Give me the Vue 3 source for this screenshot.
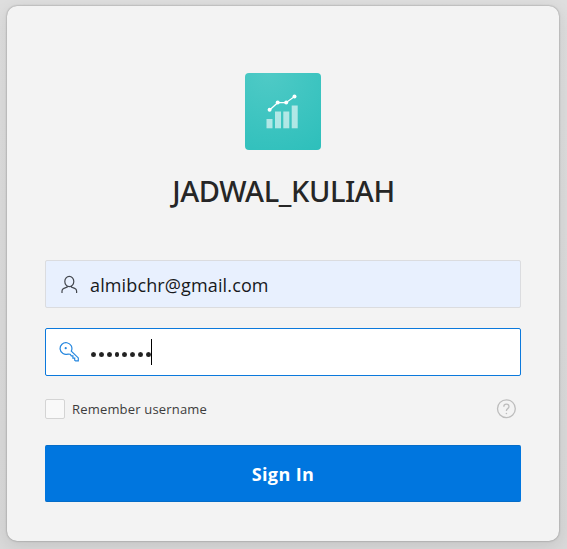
<script setup>
import { ref } from 'vue'

const username = ref('almibchr@gmail.com')
const passwordLength = 8
</script>

<template>
  <main class="page">
    <section class="card">
      <svg class="logo" viewBox="0 0 76 77">
        <g fill="#fff" fill-opacity=".6">
          <rect x="21.5" y="46" width="6" height="9.3" />
          <rect x="30" y="38.5" width="6" height="16.8" />
          <rect x="38.3" y="38.5" width="6" height="16.8" />
          <rect x="46.7" y="32.5" width="6" height="22.8" />
        </g>
        <path d="M24.6 37 32.7 29.7H41L49.5 23.5" fill="none" stroke="#fff" stroke-width="1.2" />
        <g fill="#fff">
          <circle cx="24.6" cy="36.8" r="2" />
          <circle cx="32.7" cy="29.6" r="2" />
          <circle cx="41.2" cy="29.6" r="2" />
          <circle cx="49.5" cy="23.5" r="2" />
        </g>
      </svg>
      <h1 class="title"><span>JADWAL_KULIAH</span></h1>
      <div class="field filled">
        <svg class="icon" viewBox="0 0 20 20" fill="none" stroke="#43474e" stroke-width="1.2">
          <ellipse cx="10.3" cy="7.5" rx="4.5" ry="5.1" />
          <path d="M8.2 12v1.1L4.9 14.4Q3 15.2 3 17V18.9M12.4 12v1.1l3.3 1.3q1.9.8 1.9 2.6V18.9" />
        </svg>
        <span class="value">{{ username }}</span>
      </div>
      <div class="field focused">
        <svg class="icon" viewBox="0 0 20 20" fill="none" stroke="#2587df" stroke-width="1.2">
          <path d="M12.3 9.1A5.9 5.9 0 1 0 9.2 12L11.2 12.2 12.3 13.9H13.9V16.2H15.7V18.3L16.6 18.9H19.3V15.9Z" />
          <circle cx="6.7" cy="6.2" r="1.1" fill="#2587df" stroke="none" />
        </svg>
        <span class="password"><i v-for="n in passwordLength" :key="n" class="dot"></i></span>
        <span class="caret"></span>
      </div>
      <div class="options">
        <span class="checkbox"></span>
        <span class="label">Remember username</span>
        <svg class="help" viewBox="0 0 20 20" fill="none" stroke="#bdbdbd" stroke-width="1.3">
          <circle cx="10.4" cy="9.7" r="8.9" />
          <path d="M7.8 7.7Q7.8 5.2 10.4 5.2T13 7.5Q13 8.7 11.7 9.6T10.4 12.1" />
          <circle cx="10.4" cy="14.5" r=".8" fill="#bdbdbd" stroke="none" />
        </svg>
      </div>
      <button class="submit"><span>Sign In</span></button>
    </section>
  </main>
</template>

<style>
body {
  background: #d8d8d8;
}
</style>

<style scoped>
.page {
  box-sizing: border-box;
  height: 549px;
  padding: 6px 8px 8px 7px;
  overflow: hidden;
  background: linear-gradient(#dedede, #d9d9d9);
  font-family: "Open Sans", "Noto Sans", sans-serif;
}
.card {
  box-sizing: border-box;
  display: flex;
  flex-direction: column;
  height: 535px;
  padding: 67px 38px 39px;
  border-radius: 10px;
  background: #f3f3f3;
  box-shadow: 0 0 2px rgba(0, 0, 0, .4), 0 4px 16px rgba(0, 0, 0, .1);
}
.logo {
  align-self: center;
  width: 76px;
  height: 77px;
  border-radius: 4px;
  background: radial-gradient(circle at 30% 0, #4fcac6, #2dbfbb);
}
.title {
  display: flex;
  justify-content: center;
  margin: 20px 0 48px;
  height: 42px;
  padding-left: 1px;
  line-height: 42px;
  font-family: "Noto Sans", sans-serif;
  font-size: 29px;
  font-weight: 500;
  letter-spacing: -.4px;
  color: #262626;
}
.field {
  box-sizing: border-box;
  display: flex;
  align-items: center;
  height: 48px;
  margin-bottom: 20px;
  padding-left: 13px;
  border: 1px solid #dbdcdf;
  border-radius: 2px;
  background: #fff;
}
.filled {
  background: #e8f0fe;
}
.focused {
  border-color: #0b79dc;
}
.icon {
  width: 20px;
  height: 20px;
}
.value {
  margin-left: 11px;
  padding-top: 2px;
  font-size: 18px;
  line-height: 24px;
  letter-spacing: .13px;
  color: #17191c;
}
.password {
  display: flex;
  gap: 3px;
  margin: 4px 0 0 12px;
}
.dot {
  width: 4.85px;
  height: 5px;
  border-radius: 50%;
  background: #222;
}
.caret {
  width: 1px;
  height: 26px;
  background: #000;
}
.options {
  display: flex;
  align-items: center;
  height: 20px;
  margin: 3px 0 26px;
}
.checkbox {
  box-sizing: border-box;
  width: 20px;
  height: 20px;
  border: 1px solid #d4d4d4;
  border-radius: 2px;
  background: #f9f9f9;
}
.label {
  margin-left: 7px;
  font-size: 13px;
  line-height: 20px;
  letter-spacing: .18px;
  color: #3c3c3c;
}
.help {
  width: 20px;
  height: 20px;
  margin: 0 5px 0 auto;
}
.submit {
  height: 57px;
  padding: 2px 0 0;
  border: 1px solid #046cc8;
  border-width: 1px 0;
  border-radius: 2px;
  background: #0076df;
  color: #fff;
  font: 700 18px/53px "Open Sans", sans-serif;
  letter-spacing: .4px;
}
</style>
